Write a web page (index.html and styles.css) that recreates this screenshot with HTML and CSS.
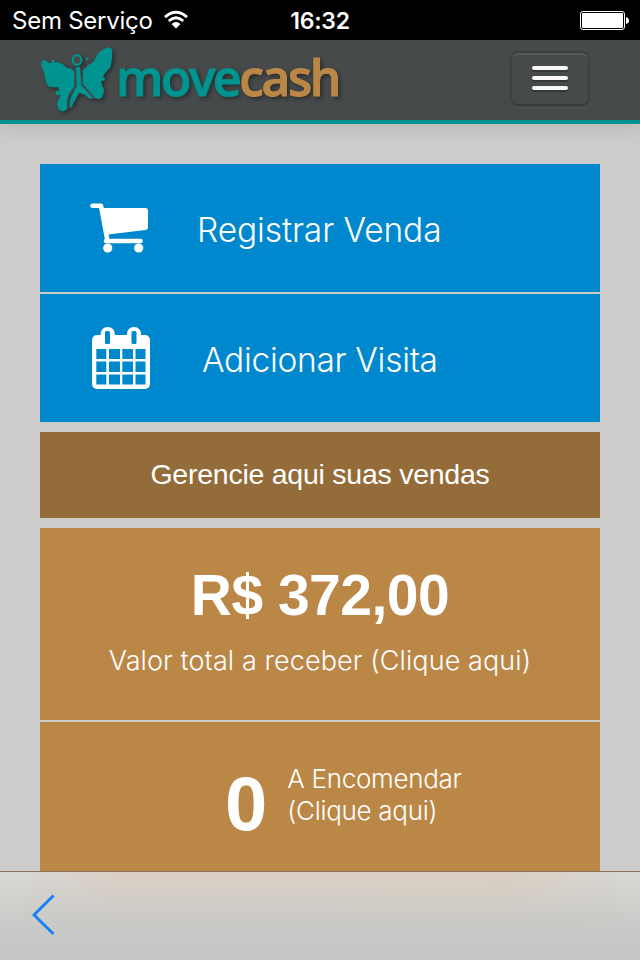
FILE: index.html
```html
<!DOCTYPE html>
<html lang="pt-BR">
<head>
  <meta charset="UTF-8">
  <title>Movecash</title>
  <link rel="stylesheet" href="styles.css">
</head>
<body>

<div class="status-bar">
  <div class="carrier">
    <span>Sem Serviço</span>
    <svg class="wifi" width="26" height="20" viewBox="0 0 26 20">
      <path d="M2 7.2 Q13 -2.6 24 7.2 M5.8 11 Q13 4.6 20.2 11" fill="none" stroke="#fff" stroke-width="2.9"/>
      <path d="M8.5 14 Q13 10 17.5 14 L13 18.5Z" fill="#fff"/>
    </svg>
  </div>
  <span class="clock">16:32</span>
  <svg class="battery" width="50" height="20" viewBox="0 0 50 20">
    <rect x=".5" y="1.5" width="44" height="18" rx="2.5" fill="none" stroke="#fff"/>
    <rect x="2" y="3" width="41" height="15" rx="1" fill="#fff"/>
    <path d="M46 7 Q49 8 49 10.5 Q49 13 46 14Z" fill="#fff"/>
  </svg>
</div>

<header class="navbar">
  <svg class="logo" width="330" height="80" viewBox="0 0 330 80">
    <g class="butterfly">
      <path d="M12 21 Q14 18 19 23 L27 22 Q34 24 37 28 Q43 28 44.5 33 L44.5 46 L40 53 Q36 58 38 67 Q36 72 31 71 Q26 68 28 61 Q31 56 30 51 L28 47 Q22 48 18 46 Q15 41 14 32 Q10 26 12 21Z"/>
      <path d="M53 30 Q56 29 58 25 Q63 23 65 19 Q68 12 74 9 Q81 5 82 10 Q83 19 80 28 Q73 34 72 40 Q70 44 74 49 Q74 58 69 59 Q65 59 60 54 L53 45Z"/>
      <path d="M46 27 L50 27 L51.5 45 L63 58 L60 59 Q54 53 49 53 L44 62 L41 68 L39.5 67 Q39 59 43 53 L46.5 46Z"/>
      <ellipse class="head" cx="47" cy="20" rx="4.3" ry="4.9"/>
      <circle cx="28" cy="53" r="2.4"/>
      <circle cx="57" cy="19" r="1.4"/>
      <circle cx="23" cy="21" r="1.5"/>
      <circle cx="73" cy="39" r="1.8"/>
      <path class="gap" d="M45.2 29 L45.5 46 L38.7 58 L37.5 67 M51.8 30 L52.4 44 L65 59"/>
    </g>
    <text class="wordmark" x="86" y="56" textLength="223" lengthAdjust="spacingAndGlyphs"><tspan class="move">move</tspan><tspan class="cash">cash</tspan></text>
  </svg>
  <button class="menu-toggle" aria-label="Menu">
    <span class="bar"></span>
    <span class="bar"></span>
    <span class="bar"></span>
  </button>
</header>

<main class="content">
  <a class="tile action">
    <svg class="tile-icon" width="80" height="80" viewBox="0 0 80 80">
      <path d="M12.5 19.8 H21 L27 52" fill="none" stroke="#fff" stroke-width="4.6" stroke-linecap="round" stroke-linejoin="round"/>
      <path d="M21 22 H65.5 Q68 22 68 24.5 V41.5 Q68 43.7 65.5 44 L28 48.5Z" fill="#fff"/>
      <path d="M26 55 H60.5" stroke="#fff" stroke-width="4.6" stroke-linecap="round"/>
      <circle cx="27.7" cy="62" r="4.6" fill="#fff"/>
      <circle cx="58.7" cy="62" r="4.6" fill="#fff"/>
    </svg>
    <span class="tile-label register">Registrar Venda</span>
  </a>
  <a class="tile action">
    <svg class="tile-icon" width="80" height="80" viewBox="0 0 80 80">
      <rect x="12" y="19" width="58" height="54" rx="5" fill="#fff"/>
      <rect x="20.7" y="11" width="14" height="20" rx="6.5" fill="#fff"/>
      <rect x="47" y="11" width="14" height="20" rx="6.5" fill="#fff"/>
      <g class="cutout">
        <rect x="25" y="15" width="5" height="13" rx="1.5"/>
        <rect x="51.5" y="15" width="5" height="13" rx="1.5"/>
        <path d="M16.3 33 h10 v10 h-10z M29 33 h11 v10 h-11z M42.3 33 h10.7 v10 h-10.7z M55.5 33 h10 v10 h-10z"/>
        <path d="M16.3 45.5 h10 v10.5 h-10z M29 45.5 h11 v10.5 h-11z M42.3 45.5 h10.7 v10.5 h-10.7z M55.5 45.5 h10 v10.5 h-10z"/>
        <path d="M16.3 58.5 h10 v10 h-10z M29 58.5 h11 v10 h-11z M42.3 58.5 h10.7 v10 h-10.7z M55.5 58.5 h10 v10 h-10z"/>
      </g>
    </svg>
    <span class="tile-label visit">Adicionar Visita</span>
  </a>

  <h2 class="section-title">Gerencie aqui suas vendas</h2>

  <a class="tile total">
    <strong class="amount">R$ 372,00</strong>
    <span class="caption">Valor total a receber (Clique aqui)</span>
  </a>
  <a class="tile orders">
    <strong class="count">0</strong>
    <span class="orders-label">A Encomendar<br>(Clique aqui)</span>
  </a>
</main>

<footer class="toolbar">
  <svg width="26" height="42" viewBox="0 0 26 42">
    <path d="M22.5 1.5 L3 21 L22.5 40" fill="none" stroke="#147efb" stroke-width="2.8"/>
  </svg>
</footer>

</body>
</html>
```

FILE: styles.css
```css
* {
  box-sizing: border-box;
}
body {
  margin: 0;
  height: 960px;
  display: flex;
  flex-direction: column;
  overflow: hidden;
  background-color: #cdccca;
  color: #fff;
  font-family: "Liberation Sans", Arial, sans-serif;
}
.status-bar {
  display: grid;
  grid-template-columns: 1fr auto 1fr;
  align-items: center;
  flex: none;
  height: 40px;
  padding: 0 10px 0 12px;
  background-color: #000;
  font-family: Inter, sans-serif;
}
.carrier {
  display: flex;
  align-items: center;
  gap: 10px;
  padding-top: 1px;
  font-size: 24px;
  letter-spacing: -0.25px;
}
.clock {
  margin-left: -2px;
  padding-top: 1px;
  font-size: 23px;
  font-weight: 600;
  letter-spacing: -0.2px;
}
.battery {
  justify-self: end;
}
.wifi {
  margin-bottom: 2px;
}
.navbar {
  display: flex;
  justify-content: space-between;
  flex: none;
  height: 84px;
  padding: 0 50px 0 30px;
  background-color: #464a4a;
  border-bottom: 4px solid #009490;
  box-shadow: 0 2px 20px rgba(0, 0, 0, 0.13);
}
.logo {
  filter: drop-shadow(2px 2px 2px rgba(0, 0, 0, 0.4));
}
.butterfly, .move {
  fill: #009490;
}
.head {
  fill: #464a4a;
  stroke: #009490;
  stroke-width: 2.2;
}
.gap {
  fill: none;
  stroke: #464a4a;
  stroke-width: 1.4;
}
.wordmark {
  font-family: "Open Sans", sans-serif;
  font-size: 51px;
  font-weight: 600;
  letter-spacing: -2.5px;
}
.move {
  stroke: #009490;
}
.cash {
  fill: #bb8747;
  stroke: #bb8747;
}
.menu-toggle {
  display: flex;
  flex-direction: column;
  align-items: center;
  gap: 6px;
  width: 80px;
  height: 56px;
  margin-top: 11px;
  padding: 13px 0 0;
  border: 2px solid #3e4141;
  border-radius: 8px;
  background: none;
  box-shadow: inset 0 2px 0 #565a5a, inset 0 -1px 0 #343737, 0 1px 0 #555959;
}
.bar {
  width: 36px;
  height: 4px;
  border-radius: 2px;
  background-color: #f9f7f7;
  box-shadow: 0 2px 0 #353838;
}
.content {
  flex: 1;
  min-height: 0;
  overflow: hidden;
  padding: 40px 40px 0;
}
.tile {
  display: flex;
  margin-bottom: 2px;
  background-color: #bb8747;
}
.action {
  align-items: center;
  height: 128px;
  padding-left: 40px;
  background-color: #0088ce;
}
.tile-icon {
  margin-bottom: 4px;
}
.cutout {
  fill: #0088ce;
}
.tile-label {
  padding-top: 4px;
  font-family: Inter, sans-serif;
  font-size: 33.5px;
  font-weight: 300;
  white-space: nowrap;
}
.register {
  margin-left: 37px;
  letter-spacing: -0.1px;
}
.visit {
  margin-left: 42px;
  letter-spacing: -0.3px;
}
.section-title {
  height: 86px;
  margin: 10px 0;
  background-color: #936c39;
  font-size: 28.5px;
  font-weight: 400;
  letter-spacing: -0.25px;
  line-height: 85px;
  text-align: center;
}
.total {
  flex-direction: column;
  align-items: center;
  height: 192px;
  padding-top: 34px;
}
.amount {
  font-size: 57px;
  letter-spacing: -0.5px;
  line-height: 66px;
}
.caption {
  margin-top: 17px;
  font-family: Inter, sans-serif;
  font-size: 27px;
  font-weight: 300;
  letter-spacing: 0.1px;
  line-height: 32px;
  white-space: nowrap;
}
.orders {
  height: 200px;
  padding: 41px 0 0 185px;
}
.count {
  font-size: 76px;
  line-height: 82px;
}
.orders-label {
  margin-left: 20px;
  font-family: Inter, sans-serif;
  font-size: 26px;
  font-weight: 300;
  letter-spacing: -0.3px;
  line-height: 32px;
  white-space: nowrap;
}
.toolbar {
  flex: none;
  height: 89px;
  padding: 22px 0 0 31px;
  border-top: 1px solid #8b7355;
  background: linear-gradient(rgba(199, 199, 199, 0), #c9c9c7 60%, #c6c6c6), linear-gradient(to right, #d9d8d5 3%, #dbd0c5 18%, #dbd0c3 80%, #d9d8d5 98%);
}
```
